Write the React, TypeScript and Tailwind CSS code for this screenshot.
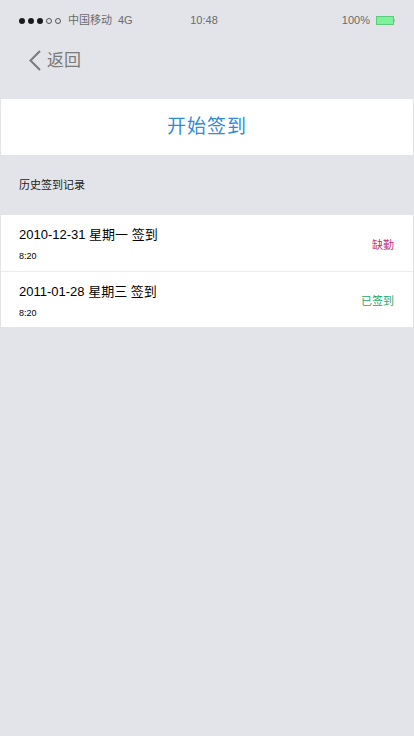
import React from "react";

export default function App() {
  const records = [
    { date: "2010-12-31 星期一 签到", time: "8:20", status: "缺勤", color: "text-[#c2317c]" },
    { date: "2011-01-28 星期三 签到", time: "8:20", status: "已签到", color: "text-[#16a86a]" },
  ];

  return (
    <div
      className="w-[414px] h-[736px] bg-[#e3e4e9] text-black overflow-hidden"
      style={{ fontFamily: '"Liberation Sans", "Noto Sans CJK SC", sans-serif' }}
    >
      {/* status bar */}
      <div className="h-[41px] flex items-center justify-between px-[19px] text-[11px] text-[#6b6b6b]">
        <div className="flex items-center w-[130px]">
          <div className="flex items-center gap-[3px]">
            <span className="w-[6px] h-[6px] rounded-full bg-[#1a1a1a]" />
            <span className="w-[6px] h-[6px] rounded-full bg-[#1a1a1a]" />
            <span className="w-[6px] h-[6px] rounded-full bg-[#1a1a1a]" />
            <span className="w-[6px] h-[6px] rounded-full border border-[#555]" />
            <span className="w-[6px] h-[6px] rounded-full border border-[#555]" />
          </div>
          <span className="ml-[7px]">中国移动</span>
          <span className="ml-[6px]">4G</span>
        </div>
        <span className="pr-[6px]">10:48</span>
        <div className="flex items-center justify-end w-[130px]">
          <span>100%</span>
          <span className="ml-[6px] w-[18px] h-[9px] bg-[#7ef29a] border border-[#5dc97a]" />
          <span className="w-[1px] h-[3px] bg-[#bbb]" />
        </div>
      </div>

      {/* nav */}
      <div className="h-[58px] flex items-start pt-[9px] pl-[28px] text-[#7a7a7a]">
        <div className="flex items-center h-[21px]">
          <svg width="14" height="21" viewBox="0 0 14 21" fill="none">
            <path d="M12 1 L2.5 10.5 L12 20" stroke="#7a7a7a" strokeWidth="2" />
          </svg>
          <span className="ml-[5px] text-[17px] leading-[21px]">返回</span>
        </div>
      </div>

      {/* start button */}
      <div className="mx-px h-[56px] bg-white flex items-center justify-center">
        <span className="text-[19px] text-[#2f8ad9] tracking-[1px]">开始签到</span>
      </div>

      {/* section title */}
      <div className="h-[60px] flex items-center pl-[19px] text-[11px] text-[#222]">
        历史签到记录
      </div>

      {/* list */}
      <div className="mx-px bg-white">
        {records.map((r, idx) => (
          <div
            key={idx}
            className={`h-[56px] flex items-center justify-between pl-[18px] pr-[19px] ${
              idx > 0 ? "border-t border-[#ececec]" : ""
            }`}
          >
            <div className="flex flex-col pt-[3px]">
              <span className="text-[13px] leading-[16px]">{r.date}</span>
              <span className="text-[9px] leading-[11px] mt-[8px]">{r.time}</span>
            </div>
            <span className={`text-[11px] pt-[4px] ${r.color}`}>{r.status}</span>
          </div>
        ))}
      </div>
    </div>
  );
}
